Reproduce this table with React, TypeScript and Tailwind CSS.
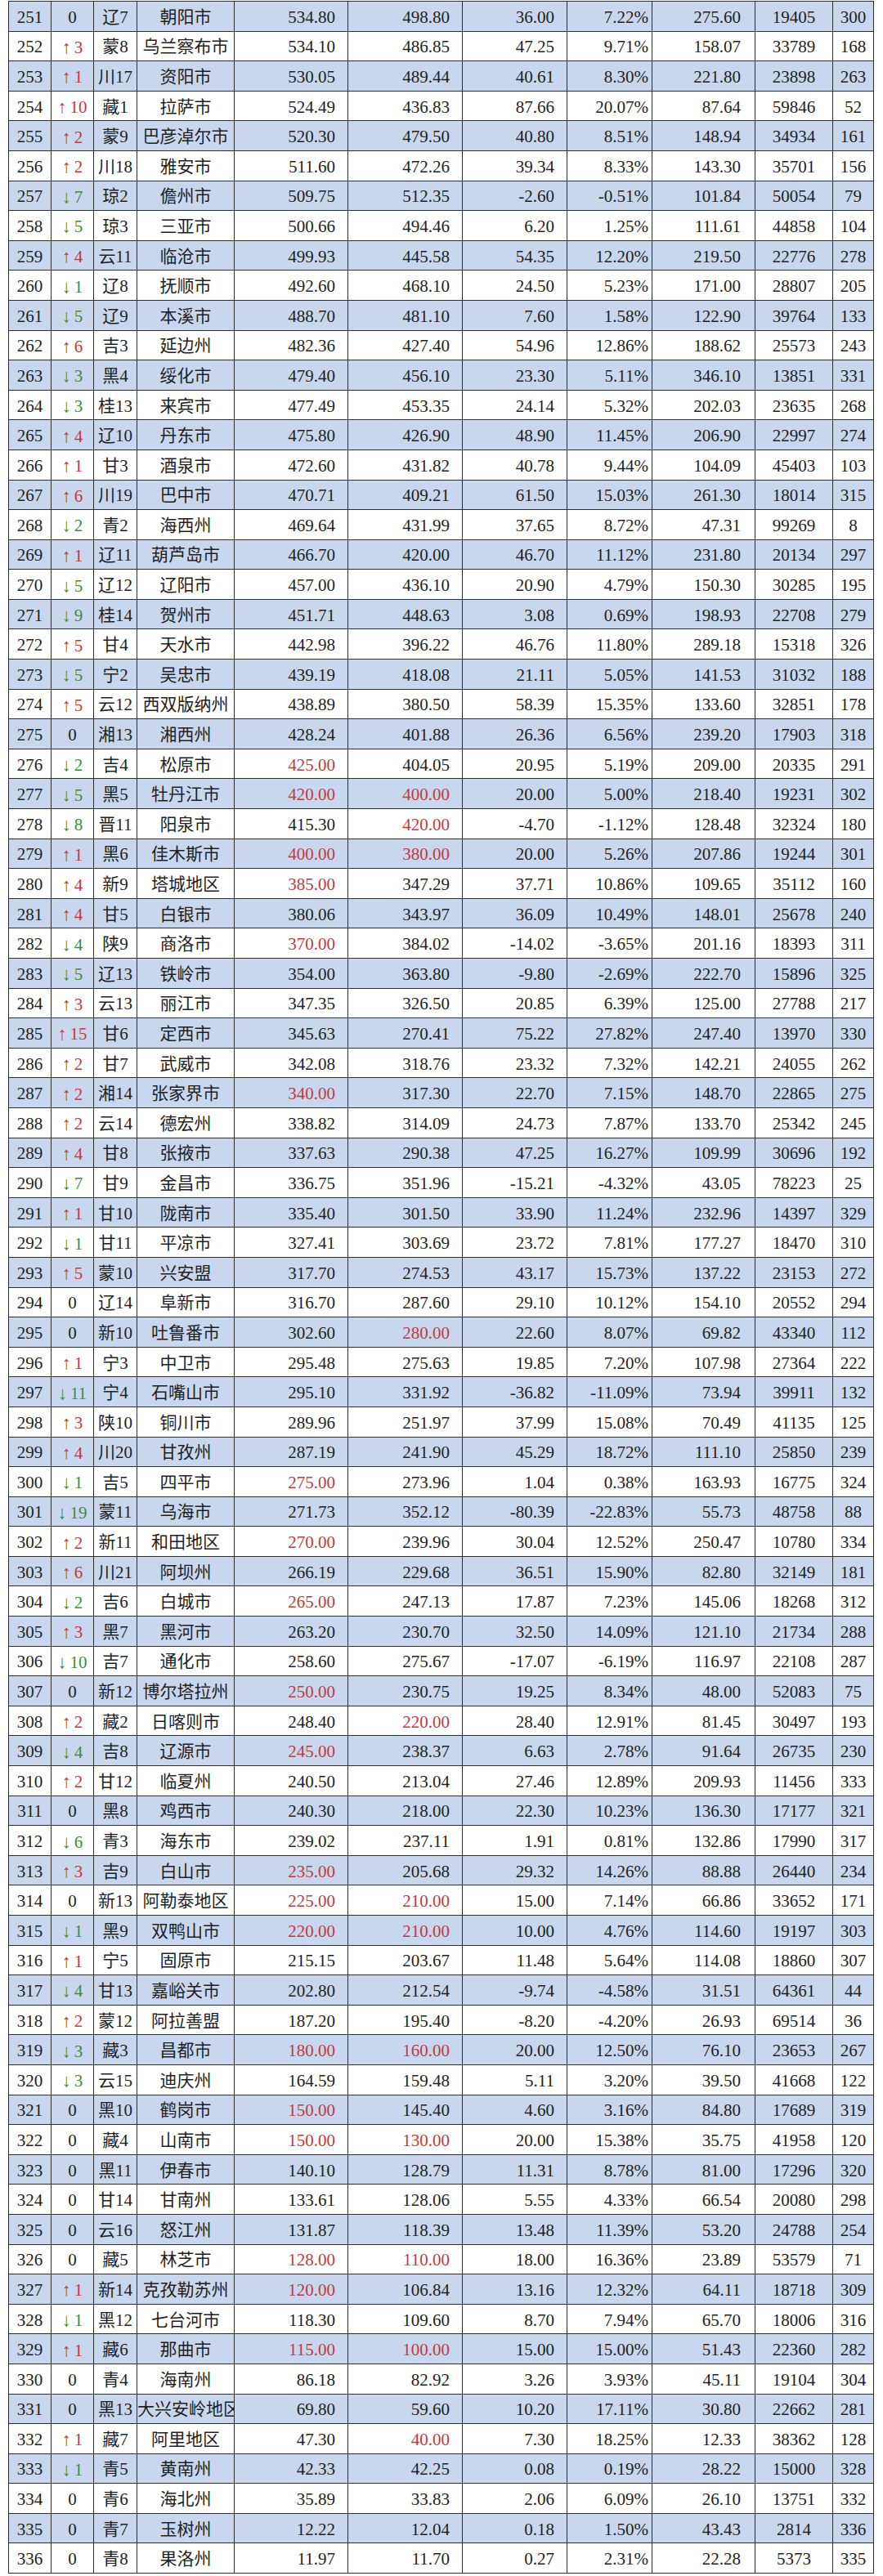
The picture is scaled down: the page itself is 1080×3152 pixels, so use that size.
type Row = [number, number, string, string, string, string, string, string, string, number, number];

// "!" in front of a value marks it red
const rows: Row[] = [
  [251, 0, "辽7", "朝阳市", "534.80", "498.80", "36.00", "7.22%", "275.60", 19405, 300],
  [252, 3, "蒙8", "乌兰察布市", "534.10", "486.85", "47.25", "9.71%", "158.07", 33789, 168],
  [253, 1, "川17", "资阳市", "530.05", "489.44", "40.61", "8.30%", "221.80", 23898, 263],
  [254, 10, "藏1", "拉萨市", "524.49", "436.83", "87.66", "20.07%", "87.64", 59846, 52],
  [255, 2, "蒙9", "巴彦淖尔市", "520.30", "479.50", "40.80", "8.51%", "148.94", 34934, 161],
  [256, 2, "川18", "雅安市", "511.60", "472.26", "39.34", "8.33%", "143.30", 35701, 156],
  [257, -7, "琼2", "儋州市", "509.75", "512.35", "-2.60", "-0.51%", "101.84", 50054, 79],
  [258, -5, "琼3", "三亚市", "500.66", "494.46", "6.20", "1.25%", "111.61", 44858, 104],
  [259, 4, "云11", "临沧市", "499.93", "445.58", "54.35", "12.20%", "219.50", 22776, 278],
  [260, -1, "辽8", "抚顺市", "492.60", "468.10", "24.50", "5.23%", "171.00", 28807, 205],
  [261, -5, "辽9", "本溪市", "488.70", "481.10", "7.60", "1.58%", "122.90", 39764, 133],
  [262, 6, "吉3", "延边州", "482.36", "427.40", "54.96", "12.86%", "188.62", 25573, 243],
  [263, -3, "黑4", "绥化市", "479.40", "456.10", "23.30", "5.11%", "346.10", 13851, 331],
  [264, -3, "桂13", "来宾市", "477.49", "453.35", "24.14", "5.32%", "202.03", 23635, 268],
  [265, 4, "辽10", "丹东市", "475.80", "426.90", "48.90", "11.45%", "206.90", 22997, 274],
  [266, 1, "甘3", "酒泉市", "472.60", "431.82", "40.78", "9.44%", "104.09", 45403, 103],
  [267, 6, "川19", "巴中市", "470.71", "409.21", "61.50", "15.03%", "261.30", 18014, 315],
  [268, -2, "青2", "海西州", "469.64", "431.99", "37.65", "8.72%", "47.31", 99269, 8],
  [269, 1, "辽11", "葫芦岛市", "466.70", "420.00", "46.70", "11.12%", "231.80", 20134, 297],
  [270, -5, "辽12", "辽阳市", "457.00", "436.10", "20.90", "4.79%", "150.30", 30285, 195],
  [271, -9, "桂14", "贺州市", "451.71", "448.63", "3.08", "0.69%", "198.93", 22708, 279],
  [272, 5, "甘4", "天水市", "442.98", "396.22", "46.76", "11.80%", "289.18", 15318, 326],
  [273, -5, "宁2", "吴忠市", "439.19", "418.08", "21.11", "5.05%", "141.53", 31032, 188],
  [274, 5, "云12", "西双版纳州", "438.89", "380.50", "58.39", "15.35%", "133.60", 32851, 178],
  [275, 0, "湘13", "湘西州", "428.24", "401.88", "26.36", "6.56%", "239.20", 17903, 318],
  [276, -2, "吉4", "松原市", "!425.00", "404.05", "20.95", "5.19%", "209.00", 20335, 291],
  [277, -5, "黑5", "牡丹江市", "!420.00", "!400.00", "20.00", "5.00%", "218.40", 19231, 302],
  [278, -8, "晋11", "阳泉市", "415.30", "!420.00", "-4.70", "-1.12%", "128.48", 32324, 180],
  [279, 1, "黑6", "佳木斯市", "!400.00", "!380.00", "20.00", "5.26%", "207.86", 19244, 301],
  [280, 4, "新9", "塔城地区", "!385.00", "347.29", "37.71", "10.86%", "109.65", 35112, 160],
  [281, 4, "甘5", "白银市", "380.06", "343.97", "36.09", "10.49%", "148.01", 25678, 240],
  [282, -4, "陕9", "商洛市", "!370.00", "384.02", "-14.02", "-3.65%", "201.16", 18393, 311],
  [283, -5, "辽13", "铁岭市", "354.00", "363.80", "-9.80", "-2.69%", "222.70", 15896, 325],
  [284, 3, "云13", "丽江市", "347.35", "326.50", "20.85", "6.39%", "125.00", 27788, 217],
  [285, 15, "甘6", "定西市", "345.63", "270.41", "75.22", "27.82%", "247.40", 13970, 330],
  [286, 2, "甘7", "武威市", "342.08", "318.76", "23.32", "7.32%", "142.21", 24055, 262],
  [287, 2, "湘14", "张家界市", "!340.00", "317.30", "22.70", "7.15%", "148.70", 22865, 275],
  [288, 2, "云14", "德宏州", "338.82", "314.09", "24.73", "7.87%", "133.70", 25342, 245],
  [289, 4, "甘8", "张掖市", "337.63", "290.38", "47.25", "16.27%", "109.99", 30696, 192],
  [290, -7, "甘9", "金昌市", "336.75", "351.96", "-15.21", "-4.32%", "43.05", 78223, 25],
  [291, 1, "甘10", "陇南市", "335.40", "301.50", "33.90", "11.24%", "232.96", 14397, 329],
  [292, -1, "甘11", "平凉市", "327.41", "303.69", "23.72", "7.81%", "177.27", 18470, 310],
  [293, 5, "蒙10", "兴安盟", "317.70", "274.53", "43.17", "15.73%", "137.22", 23153, 272],
  [294, 0, "辽14", "阜新市", "316.70", "287.60", "29.10", "10.12%", "154.10", 20552, 294],
  [295, 0, "新10", "吐鲁番市", "302.60", "!280.00", "22.60", "8.07%", "69.82", 43340, 112],
  [296, 1, "宁3", "中卫市", "295.48", "275.63", "19.85", "7.20%", "107.98", 27364, 222],
  [297, -11, "宁4", "石嘴山市", "295.10", "331.92", "-36.82", "-11.09%", "73.94", 39911, 132],
  [298, 3, "陕10", "铜川市", "289.96", "251.97", "37.99", "15.08%", "70.49", 41135, 125],
  [299, 4, "川20", "甘孜州", "287.19", "241.90", "45.29", "18.72%", "111.10", 25850, 239],
  [300, -1, "吉5", "四平市", "!275.00", "273.96", "1.04", "0.38%", "163.93", 16775, 324],
  [301, -19, "蒙11", "乌海市", "271.73", "352.12", "-80.39", "-22.83%", "55.73", 48758, 88],
  [302, 2, "新11", "和田地区", "!270.00", "239.96", "30.04", "12.52%", "250.47", 10780, 334],
  [303, 6, "川21", "阿坝州", "266.19", "229.68", "36.51", "15.90%", "82.80", 32149, 181],
  [304, -2, "吉6", "白城市", "!265.00", "247.13", "17.87", "7.23%", "145.06", 18268, 312],
  [305, 3, "黑7", "黑河市", "263.20", "230.70", "32.50", "14.09%", "121.10", 21734, 288],
  [306, -10, "吉7", "通化市", "258.60", "275.67", "-17.07", "-6.19%", "116.97", 22108, 287],
  [307, 0, "新12", "博尔塔拉州", "!250.00", "230.75", "19.25", "8.34%", "48.00", 52083, 75],
  [308, 2, "藏2", "日喀则市", "248.40", "!220.00", "28.40", "12.91%", "81.45", 30497, 193],
  [309, -4, "吉8", "辽源市", "!245.00", "238.37", "6.63", "2.78%", "91.64", 26735, 230],
  [310, 2, "甘12", "临夏州", "240.50", "213.04", "27.46", "12.89%", "209.93", 11456, 333],
  [311, 0, "黑8", "鸡西市", "240.30", "218.00", "22.30", "10.23%", "136.30", 17177, 321],
  [312, -6, "青3", "海东市", "239.02", "237.11", "1.91", "0.81%", "132.86", 17990, 317],
  [313, 3, "吉9", "白山市", "!235.00", "205.68", "29.32", "14.26%", "88.88", 26440, 234],
  [314, 0, "新13", "阿勒泰地区", "!225.00", "!210.00", "15.00", "7.14%", "66.86", 33652, 171],
  [315, -1, "黑9", "双鸭山市", "!220.00", "!210.00", "10.00", "4.76%", "114.60", 19197, 303],
  [316, 1, "宁5", "固原市", "215.15", "203.67", "11.48", "5.64%", "114.08", 18860, 307],
  [317, -4, "甘13", "嘉峪关市", "202.80", "212.54", "-9.74", "-4.58%", "31.51", 64361, 44],
  [318, 2, "蒙12", "阿拉善盟", "187.20", "195.40", "-8.20", "-4.20%", "26.93", 69514, 36],
  [319, -3, "藏3", "昌都市", "!180.00", "!160.00", "20.00", "12.50%", "76.10", 23653, 267],
  [320, -3, "云15", "迪庆州", "164.59", "159.48", "5.11", "3.20%", "39.50", 41668, 122],
  [321, 0, "黑10", "鹤岗市", "!150.00", "145.40", "4.60", "3.16%", "84.80", 17689, 319],
  [322, 0, "藏4", "山南市", "!150.00", "!130.00", "20.00", "15.38%", "35.75", 41958, 120],
  [323, 0, "黑11", "伊春市", "140.10", "128.79", "11.31", "8.78%", "81.00", 17296, 320],
  [324, 0, "甘14", "甘南州", "133.61", "128.06", "5.55", "4.33%", "66.54", 20080, 298],
  [325, 0, "云16", "怒江州", "131.87", "118.39", "13.48", "11.39%", "53.20", 24788, 254],
  [326, 0, "藏5", "林芝市", "!128.00", "!110.00", "18.00", "16.36%", "23.89", 53579, 71],
  [327, 1, "新14", "克孜勒苏州", "!120.00", "106.84", "13.16", "12.32%", "64.11", 18718, 309],
  [328, -1, "黑12", "七台河市", "118.30", "109.60", "8.70", "7.94%", "65.70", 18006, 316],
  [329, 1, "藏6", "那曲市", "!115.00", "!100.00", "15.00", "15.00%", "51.43", 22360, 282],
  [330, 0, "青4", "海南州", "86.18", "82.92", "3.26", "3.93%", "45.11", 19104, 304],
  [331, 0, "黑13", "大兴安岭地区", "69.80", "59.60", "10.20", "17.11%", "30.80", 22662, 281],
  [332, 1, "藏7", "阿里地区", "47.30", "!40.00", "7.30", "18.25%", "12.33", 38362, 128],
  [333, -1, "青5", "黄南州", "42.33", "42.25", "0.08", "0.19%", "28.22", 15000, 328],
  [334, 0, "青6", "海北州", "35.89", "33.83", "2.06", "6.09%", "26.10", 13751, 332],
  [335, 0, "青7", "玉树州", "12.22", "12.04", "0.18", "1.50%", "43.43", 2814, 336],
  [336, 0, "青8", "果洛州", "11.97", "11.70", "0.27", "2.31%", "22.28", 5373, 335],
];

const cell = "border-[1.5px] border-[#2e2e2e] p-0 pt-[3px] align-middle leading-none whitespace-nowrap overflow-hidden";

function Val({ v }: { v: string }) {
  const red = v.startsWith("!");
  return <span className={red ? "text-[#c33a3d]" : ""}>{red ? v.slice(1) : v}</span>;
}

function Change({ n }: { n: number }) {
  if (n === 0) return <span>0</span>;
  const up = n > 0;
  return (
    <span className={up ? "text-[#c8383b]" : "text-[#3e8c3e]"}>
      <span className="inline-block w-[15px] text-left text-[22px]">{up ? "↑" : "↓"}</span>
      {Math.abs(n)}
    </span>
  );
}

export default function App() {
  return (
    <div className="min-h-[3152px] bg-white pt-[1px] text-[21px] text-[#1f1f1f] [font-family:'Liberation_Serif','Noto_Sans_CJK_SC',serif]">
      <table className="ml-[10px] w-[1058px] table-fixed border-collapse">
        <colgroup>
          <col className="w-[52px]" />
          <col className="w-[52px]" />
          <col className="w-[53px]" />
          <col className="w-[119px]" />
          <col className="w-[139px]" />
          <col className="w-[140px]" />
          <col className="w-[128px]" />
          <col className="w-[104px]" />
          <col className="w-[126px]" />
          <col className="w-[95px]" />
          <col className="w-[50px]" />
        </colgroup>
        <tbody>
          {rows.map((r) => {
            const long = r[3].length > 5;
            return (
              <tr key={r[0]} className={`h-[36.6px] ${r[0] % 2 === 1 ? "bg-[#c8d7ee]" : "bg-white"}`}>
                <td className={`${cell} text-center`}>{r[0]}</td>
                <td className={`${cell} text-center`}>
                  <Change n={r[1]} />
                </td>
                <td className={`${cell} text-center`}>{r[2]}</td>
                <td className={`${cell} ${long ? "text-left" : "text-center"}`}>{r[3]}</td>
                <td className={`${cell} pr-[15px] text-right`}>
                  <Val v={r[4]} />
                </td>
                <td className={`${cell} pr-[15px] text-right`}>
                  <Val v={r[5]} />
                </td>
                <td className={`${cell} pr-[15px] text-right`}>{r[6]}</td>
                <td className={`${cell} pr-[4px] text-right`}>{r[7]}</td>
                <td className={`${cell} pr-[17px] text-right`}>{r[8]}</td>
                <td className={`${cell} text-center`}>{r[9]}</td>
                <td className={`${cell} text-center`}>{r[10]}</td>
              </tr>
            );
          })}
        </tbody>
      </table>
    </div>
  );
}
